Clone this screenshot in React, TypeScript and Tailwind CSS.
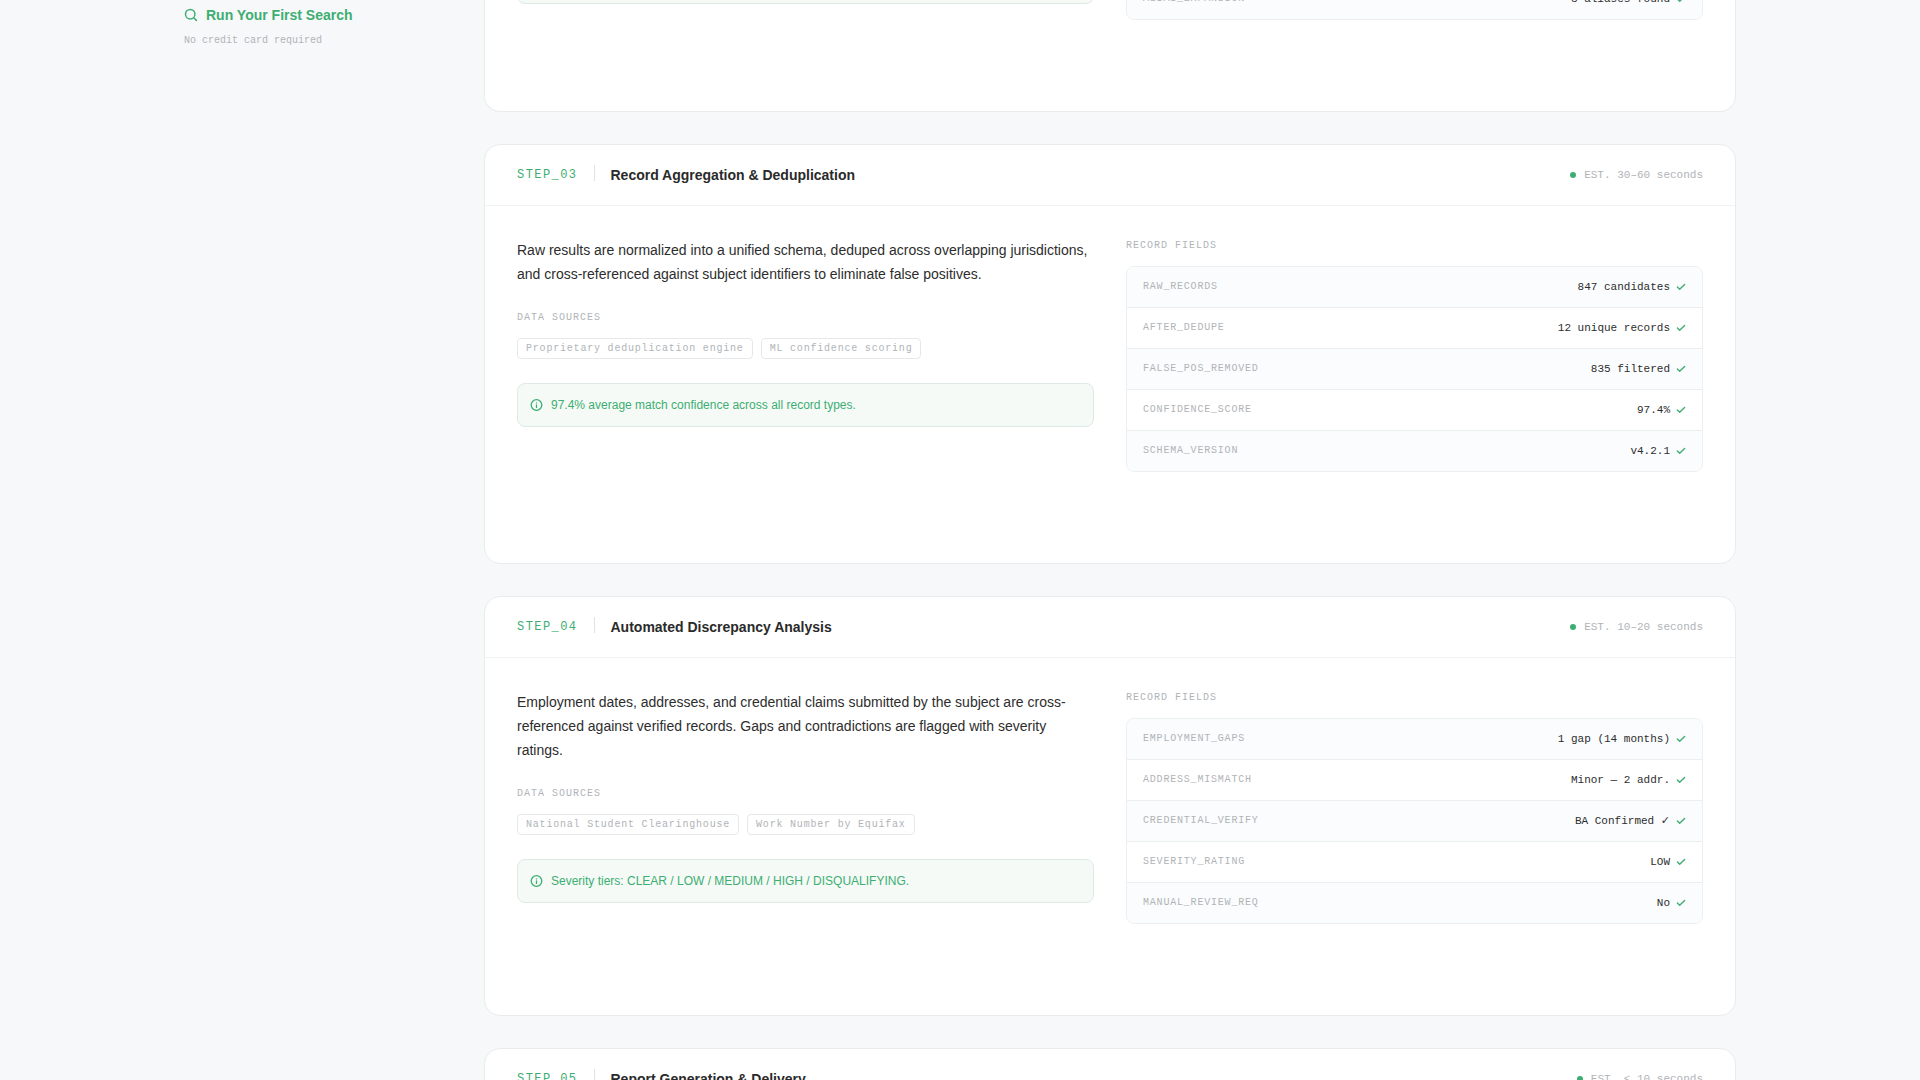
type Field = { name: string; value: string };

type Step = {
  id: string;
  title: string;
  estimate: string;
  description: string;
  sources: string[];
  note: string;
  fields: Field[];
};

const steps: Step[] = [
  {
    id: "STEP_03",
    title: "Record Aggregation & Deduplication",
    estimate: "EST. 30–60 seconds",
    description:
      "Raw results are normalized into a unified schema, deduped across overlapping jurisdictions, and cross-referenced against subject identifiers to eliminate false positives.",
    sources: ["Proprietary deduplication engine", "ML confidence scoring"],
    note: "97.4% average match confidence across all record types.",
    fields: [
      { name: "RAW_RECORDS", value: "847 candidates" },
      { name: "AFTER_DEDUPE", value: "12 unique records" },
      { name: "FALSE_POS_REMOVED", value: "835 filtered" },
      { name: "CONFIDENCE_SCORE", value: "97.4%" },
      { name: "SCHEMA_VERSION", value: "v4.2.1" },
    ],
  },
  {
    id: "STEP_04",
    title: "Automated Discrepancy Analysis",
    estimate: "EST. 10–20 seconds",
    description:
      "Employment dates, addresses, and credential claims submitted by the subject are cross-referenced against verified records. Gaps and contradictions are flagged with severity ratings.",
    sources: ["National Student Clearinghouse", "Work Number by Equifax"],
    note: "Severity tiers: CLEAR / LOW / MEDIUM / HIGH / DISQUALIFYING.",
    fields: [
      { name: "EMPLOYMENT_GAPS", value: "1 gap (14 months)" },
      { name: "ADDRESS_MISMATCH", value: "Minor — 2 addr." },
      { name: "CREDENTIAL_VERIFY", value: "BA Confirmed ✓" },
      { name: "SEVERITY_RATING", value: "LOW" },
      { name: "MANUAL_REVIEW_REQ", value: "No" },
    ],
  },
];

const mono = "font-['Liberation_Mono','DejaVu_Sans',monospace]";

function SearchIcon() {
  return (
    <svg width="14" height="14" viewBox="0 0 14 14" fill="none" stroke="currentColor" strokeWidth="1.5" strokeLinecap="round" aria-hidden="true">
      <circle cx="6.2" cy="6.2" r="4.7" />
      <path d="M9.7 9.7 12.4 12.4" />
    </svg>
  );
}

function InfoIcon() {
  return (
    <svg className="shrink-0" width="13" height="13" viewBox="0 0 13 13" fill="none" stroke="currentColor" strokeWidth="1.3" strokeLinecap="round" aria-hidden="true">
      <circle cx="6.5" cy="6" r="5.3" />
      <path d="M6.5 5.9V8.4" />
      <path d="M6.5 3.8v.1" />
    </svg>
  );
}

function CheckIcon() {
  return (
    <svg className="shrink-0 text-[#3cae71]" width="10" height="10" viewBox="0 0 10 10" fill="none" stroke="currentColor" strokeWidth="1.4" strokeLinecap="round" strokeLinejoin="round" aria-hidden="true">
      <path d="M1.4 5 3.7 7.2 8.6 2.5" />
    </svg>
  );
}

function FieldTable({ fields }: { fields: Field[] }) {
  return (
    <div className="overflow-hidden rounded-lg border border-[#eceff0]">
      <table className={`w-full border-separate border-spacing-0 ${mono}`}>
        <tbody>
          {fields.map((f, i) => {
            const shade = i % 2 === 0 ? "bg-[#fafcfd]" : "bg-white";
            const line = i < fields.length - 1 ? "h-[41px] border-b border-[#eceff0]" : "h-10";
            return (
              <tr key={f.name} className={shade}>
                <th scope="row" className={`${line} px-4 text-left text-[10px] leading-4 font-normal tracking-[0.08em] text-[#b0b4b7]`}>
                  {f.name}
                </th>
                <td className={`${line} px-4 text-[11px] leading-4 text-[#2d2d2d]`}>
                  <span className="flex items-center justify-end gap-1.5">
                    {f.value}
                    <CheckIcon />
                  </span>
                </td>
              </tr>
            );
          })}
        </tbody>
      </table>
    </div>
  );
}

function CardHeader({ id, title, estimate }: { id: string; title: string; estimate: string }) {
  return (
    <header className="flex items-center justify-between px-8 py-5">
      <div className="flex items-start gap-4">
        <span className={`text-xs leading-5 tracking-[0.12em] text-[#3cae71] ${mono}`}>{id}</span>
        <span className="h-4 w-px bg-[#dfe3e6]" />
        <h3 className="text-sm leading-5 font-bold text-[#2a2a2a]">{title}</h3>
      </div>
      <span className={`flex items-center gap-2 text-[11px] leading-4 text-[#b0b4b7] ${mono}`}>
        <span className="size-1.5 rounded-full bg-[#3cae71]" />
        {estimate}
      </span>
    </header>
  );
}

function SectionLabel({ children }: { children: string }) {
  return <h4 className={`mb-3 text-[10px] leading-4 tracking-[0.1em] text-[#b0b4b7] ${mono}`}>{children}</h4>;
}

function StepCard({ step }: { step: Step }) {
  return (
    <article className="min-h-[420px] rounded-2xl border border-[#e9eced] bg-white">
      <CardHeader id={step.id} title={step.title} estimate={step.estimate} />
      <div className="grid grid-cols-2 gap-8 border-t border-[#f0f2f3] p-8">
        <div>
          <p className="mb-6 text-sm leading-6 text-[#2d2d2d]">{step.description}</p>
          <SectionLabel>DATA SOURCES</SectionLabel>
          <ul className="mb-6 flex flex-wrap gap-2">
            {step.sources.map((s) => (
              <li key={s} className={`rounded-sm border border-[#e6e9eb] px-2 py-0.5 text-[10px] leading-[15px] tracking-[0.08em] text-[#b0b4b7] ${mono}`}>
                {s}
              </li>
            ))}
          </ul>
          <p className="flex items-center gap-2 rounded-lg border border-[#dcebe4] bg-[#f5faf7] p-3 text-xs leading-[18px] text-[#3cae71]">
            <InfoIcon />
            {step.note}
          </p>
        </div>
        <div>
          <SectionLabel>RECORD FIELDS</SectionLabel>
          <FieldTable fields={step.fields} />
        </div>
      </div>
    </article>
  );
}

export default function App() {
  return (
    <div className="h-screen overflow-hidden bg-[#f7f8fa] font-['Liberation_Sans',Arial,sans-serif]">
      <div className="mx-auto flex max-w-[1600px] gap-16 px-6">
        <aside className="w-[236px] shrink-0 pt-[5px]">
          <a href="#search" className="flex items-center gap-2 text-sm leading-5 font-bold text-[#3cae71]">
            <SearchIcon />
            Run Your First Search
          </a>
          <p className={`mt-2 text-[10px] leading-[15px] text-[#b0b4b7] ${mono}`}>No credit card required</p>
        </aside>

        <main className="-mt-10 flex min-w-0 flex-1 flex-col gap-8">
          <article className="rounded-b-2xl border border-t-0 border-[#e9eced] bg-white px-8 pb-[91px]">
            <div className="grid grid-cols-2 gap-8">
              <div className="h-11 rounded-lg border border-[#dcebe4] bg-[#f5faf7]" />
              <div className="pt-[18px]">
                <FieldTable fields={[{ name: "ALIAS_EXPANSION", value: "3 aliases found" }]} />
              </div>
            </div>
          </article>

          {steps.map((s) => (
            <StepCard key={s.id} step={s} />
          ))}

          <article className="rounded-2xl border border-[#e9eced] bg-white">
            <CardHeader id="STEP_05" title="Report Generation & Delivery" estimate="EST. < 10 seconds" />
          </article>
        </main>
      </div>
    </div>
  );
}
